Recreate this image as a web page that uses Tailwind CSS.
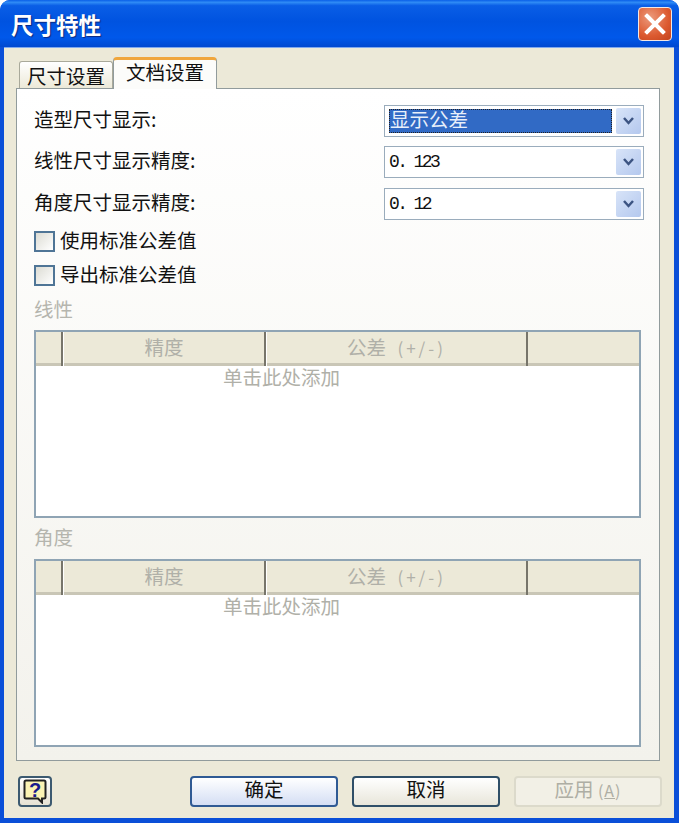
<!DOCTYPE html>
<html lang="zh-CN">
<head>
  <meta charset="UTF-8" />
  <title>尺寸特性</title>
  <script src="https://cdn.jsdelivr.net/npm/@tailwindcss/browser@4"></script>
</head>
<body class="bg-white">
<div class="w-[679px] h-[823px] flex flex-col overflow-hidden rounded-t-[10px] bg-[#0a4fd8] text-[19.5px] leading-[24px] text-[#111] font-['Noto_Sans_CJK_SC','Liberation_Sans',sans-serif]">

  <!-- title bar -->
  <div class="h-[47px] shrink-0 flex items-center justify-between pl-[11px] pr-[7px] bg-[linear-gradient(180deg,#0a5fe8_0%,#2f8bf5_5%,#0a5ee6_12%,#0053e0_45%,#0058ea_80%,#0048d0_100%)]">
    <span class="text-[22.5px] font-bold text-white [text-shadow:1px_1px_1px_#0a2a80]">尺寸特性</span>
    <div class="w-[34px] h-[34px] rounded-[4px] border border-[#f2e6e2] bg-[radial-gradient(circle_at_35%_30%,#ec9a7c,#dc5a30_60%,#c2421c)] flex items-center justify-center">
      <svg width="22" height="22" viewBox="0 0 22 22"><path d="M3 3L19 19M19 3L3 19" stroke="#fff" stroke-width="4" stroke-linecap="square" /></svg>
    </div>
  </div>

  <!-- client area -->
  <div class="flex-1 mx-[4px] mr-[5px] mb-[5px] bg-[#ece9d8] border-t border-[#7fa8ee] flex flex-col pl-[12px] pr-[14px]">

    <!-- tabs -->
    <div class="h-[41px] shrink-0 flex items-end pl-[3px] relative z-10 -mb-px">
      <div class="w-[94px] h-[27px] mb-px border border-b-0 border-[#a9a99a] rounded-t-[3px] bg-linear-to-b from-white to-[#ece9d8] text-center leading-[27px]">尺寸设置</div>
      <div class="w-[104px] h-[32px] border-x border-[#919b9c] rounded-t-[4px] bg-[#fcfcfa] border-t-[3px] border-t-[#f0a63c] text-center leading-[23px]">文档设置</div>
    </div>

    <!-- panel -->
    <div class="h-[673px] shrink-0 border border-[#919b9c] bg-linear-to-b from-white to-[#f3f2ec] pl-[17px] pr-[18px] pt-[16px] flex flex-col">

      <div class="flex items-center justify-between h-[32px]">
        <span class="mb-[4px]">造型尺寸显示:</span>
        <div class="w-[260px] h-[32px] border border-[#9aacbc] bg-white flex items-center pl-[4px] pr-[2px] mr-[-3px]">
          <div class="flex-1 h-[24px] bg-[#316ac5] border border-dotted border-[#222] text-[#e8effa] leading-[18px]">显示公差</div>
          <div class="ml-[4px] w-[25px] h-[26px] rounded-[2px] bg-linear-to-br from-[#d8e4f8] to-[#b4c8ee] flex items-center justify-center">
            <svg width="13" height="10" viewBox="0 0 13 10"><path d="M2 2L6.500 7L11 2" fill="none" stroke="#3c5482" stroke-width="2.500" /></svg>
          </div>
        </div>
      </div>

      <div class="flex items-center justify-between h-[32px] mt-[9px]">
        <span class="mb-[4px]">线性尺寸显示精度:</span>
        <div class="w-[260px] h-[32px] border border-[#9aacbc] bg-white flex items-center pl-[4px] pr-[2px] mr-[-3px]">
          <div class="flex-1 font-['Liberation_Mono',monospace] text-[18px] tracking-[-2.6px] mb-[1px]">0. 123</div>
          <div class="ml-[4px] w-[25px] h-[26px] rounded-[2px] bg-linear-to-br from-[#d8e4f8] to-[#b4c8ee] flex items-center justify-center">
            <svg width="13" height="10" viewBox="0 0 13 10"><path d="M2 2L6.500 7L11 2" fill="none" stroke="#3c5482" stroke-width="2.500" /></svg>
          </div>
        </div>
      </div>

      <div class="flex items-center justify-between h-[32px] mt-[10px]">
        <span class="mb-[4px]">角度尺寸显示精度:</span>
        <div class="w-[260px] h-[32px] border border-[#9aacbc] bg-white flex items-center pl-[4px] pr-[2px] mr-[-3px]">
          <div class="flex-1 font-['Liberation_Mono',monospace] text-[18px] tracking-[-2.6px] mb-[1px]">0. 12</div>
          <div class="ml-[4px] w-[25px] h-[26px] rounded-[2px] bg-linear-to-br from-[#d8e4f8] to-[#b4c8ee] flex items-center justify-center">
            <svg width="13" height="10" viewBox="0 0 13 10"><path d="M2 2L6.500 7L11 2" fill="none" stroke="#3c5482" stroke-width="2.500" /></svg>
          </div>
        </div>
      </div>

      <div class="flex items-center gap-[5px] h-[21px] mt-[11px]">
        <div class="w-[21px] h-[21px] border-2 border-[#4f7596] bg-linear-to-br from-[#dcdcd4] to-white"></div>
        <span class="mb-[4px]">使用标准公差值</span>
      </div>
      <div class="flex items-center gap-[5px] h-[21px] mt-[13px]">
        <div class="w-[21px] h-[21px] border-2 border-[#4f7596] bg-linear-to-br from-[#dcdcd4] to-white"></div>
        <span class="mb-[4px]">导出标准公差值</span>
      </div>

      <div class="h-[24px] mt-[13px] leading-[20px] text-[#b5b5ae]">线性</div>

      <!-- linear grid -->
      <div class="w-[607px] h-[188px] mt-[7px] border-2 border-[#8fa4b4] bg-white text-[#b0b0a8]">
        <div class="h-[34px] flex bg-[#ece9d8] border-b-[3px] border-[#c9c6b6]">
          <div class="w-[27px] border-r-2 border-[#77756a] -mb-[3px]"></div>
          <div class="w-[203px] border-r-2 border-[#77756a] -mb-[3px] border-l border-l-white text-center leading-[30px]">精度</div>
          <div class="w-[262px] border-r-2 border-[#77756a] -mb-[3px] border-l border-l-white text-center leading-[30px]">公差 <span class="ml-[7px] text-[17px] tracking-[3px]">(+/-)</span></div>
        </div>
        <div class="w-[491px] text-center leading-[20px] pt-[1px]">单击此处添加</div>
      </div>

      <div class="h-[24px] mt-[9px] leading-[20px] text-[#b5b5ae]">角度</div>

      <!-- angle grid -->
      <div class="w-[607px] h-[188px] mt-[8px] border-2 border-[#8fa4b4] bg-white text-[#b0b0a8]">
        <div class="h-[34px] flex bg-[#ece9d8] border-b-[3px] border-[#c9c6b6]">
          <div class="w-[27px] border-r-2 border-[#77756a] -mb-[3px]"></div>
          <div class="w-[203px] border-r-2 border-[#77756a] -mb-[3px] border-l border-l-white text-center leading-[30px]">精度</div>
          <div class="w-[262px] border-r-2 border-[#77756a] -mb-[3px] border-l border-l-white text-center leading-[30px]">公差 <span class="ml-[7px] text-[17px] tracking-[3px]">(+/-)</span></div>
        </div>
        <div class="w-[491px] text-center leading-[20px] pt-[1px]">单击此处添加</div>
      </div>
    </div>

    <!-- buttons -->
    <div class="flex items-start mt-[15px] ml-[2px] -mr-[2px]">
      <div class="w-[34px] h-[31px] rounded-[4px] border-2 border-[#3c5a70] bg-linear-to-b from-white to-[#e6e2d4] flex items-center justify-center">
        <div class="relative w-[24px] h-[25px] flex items-center justify-center">
          <svg class="absolute inset-0" width="24" height="25" viewBox="0 0 24 25"><path d="M3 1.500H21Q22.500 1.500 22.500 3V18Q22.500 19.500 21 19.500H19V23.500L15 19.500H3Q1.500 19.500 1.500 18V3Q1.500 1.500 3 1.500Z" fill="#fbf3b4" stroke="#222" stroke-width="2" /></svg>
          <span class="relative mb-[4px] text-[#1a1a8c] text-[20px] font-bold leading-none font-['Liberation_Sans',sans-serif]">?</span>
        </div>
      </div>
      <div class="ml-[138px] w-[148px] h-[31px] rounded-[4px] border-2 border-[#2f5a94] bg-linear-to-b from-white to-[#d4def4] text-center leading-[22px]">确定</div>
      <div class="ml-[14px] w-[148px] h-[31px] rounded-[4px] border-2 border-[#2f4f68] bg-linear-to-b from-white to-[#e8e6da] text-center leading-[22px]">取消</div>
      <div class="ml-[14px] w-[148px] h-[31px] rounded-[4px] border-2 border-[#dcdacb] bg-[#f2f0e6] text-center leading-[22px] text-[#aeaea4]">应用 <span class="text-[16px] tracking-[1px]">(<span class="underline">A</span>)</span></div>
    </div>
  </div>
</div>
</body>
</html>
